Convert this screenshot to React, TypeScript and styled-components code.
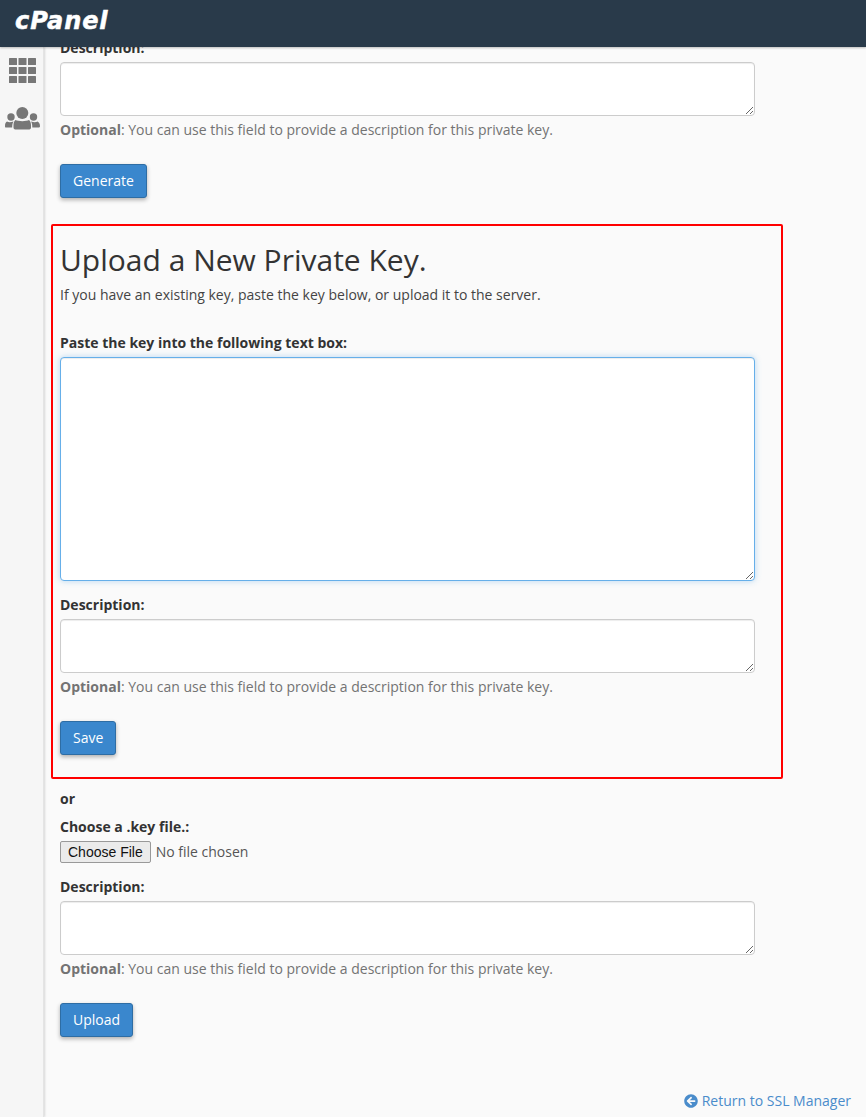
import type { FC } from 'react';

import { FaArrowCircleLeft } from 'react-icons/fa';

import styled, { createGlobalStyle } from 'styled-components';

const GlobalStyle = createGlobalStyle`
  html, body {
    margin: 0;
    height: 1117px;
    overflow: hidden;
    background: #fafafa;
    font-family: "Open Sans", sans-serif;
    font-size: 14px;
    line-height: 20px;
    color: #333;
  }
`;

const Page = styled.div`
  height: 1117px;
  display: flex;
  flex-direction: column;
  overflow: hidden;
`;

const Header = styled.header`
  position: relative;
  z-index: 2;
  flex: 0 0 47px;
  height: 47px;
  background: #293a4a;
  box-shadow: 0 1px 2px rgba(0, 0, 0, 0.25);
  display: flex;
  align-items: center;
  padding-left: 15px;
`;

const Logo = styled.span`
  font-family: "DejaVu Sans", sans-serif;
  font-weight: 700;
  font-style: italic;
  font-size: 24px;
  line-height: 1;
  letter-spacing: 0.9px;
  color: #fff;
  -webkit-text-stroke: 0.5px #fff;
  margin-top: -5px;
`;

const Body = styled.div`
  flex: 1;
  display: flex;
  min-height: 0;
`;

const Sidebar = styled.nav`
  flex: 0 0 43px;
  background: #f6f6f6;
  border-right: 1px solid #e4e4e4;
  box-shadow: 1px 0 2px rgba(0, 0, 0, 0.14);
  display: flex;
  flex-direction: column;
  padding-top: 11px;
  gap: 24px;
  color: #777;
`;

const SideIcon = styled.svg`
  display: block;
  fill: currentColor;
`;

const Main = styled.main`
  flex: 1;
  min-width: 0;
  padding: 0 15px 0 16px;
  margin-top: -9px;
  display: flex;
  flex-direction: column;
`;

const Label = styled.label`
  display: block;
  font-weight: 700;
  height: 20px;
  margin-bottom: 4px;
`;

const Area = styled.textarea<{ $tall?: boolean; $focused?: boolean }>`
  display: block;
  box-sizing: border-box;
  width: 695px;
  height: ${({ $tall }) => ($tall ? 224 : 54)}px;
  padding: 6px 12px;
  margin: 0;
  background: #fff;
  border: 1px solid ${({ $focused }) => ($focused ? '#66afe9' : '#ccc')};
  border-radius: 4px;
  outline: none;
  resize: both;
  box-shadow: ${({ $focused }) =>
    $focused
      ? 'inset 0 1px 1px rgba(0, 0, 0, 0.075), 0 0 6px rgba(102, 175, 233, 0.45)'
      : 'inset 0 1px 1px rgba(0, 0, 0, 0.075)'};
`;

const Help = styled.p`
  margin: 4px 0 0;
  color: #737373;
  height: 20px;
`;

const Button = styled.button`
  display: block;
  box-sizing: border-box;
  height: 34px;
  padding: 6px 12px;
  background: #3a87cd;
  border: 1px solid #2e6da4;
  border-radius: 3px;
  color: #fff;
  font-family: inherit;
  font-size: 14px;
  line-height: 20px;
  box-shadow: 0 2px 4px rgba(0, 0, 0, 0.3);
`;

const Row = styled.div<{ $top: number }>`
  margin-top: ${({ $top }) => $top}px;
`;

const Highlight = styled.section`
  box-sizing: border-box;
  width: 732px;
  height: 555px;
  margin: 26px 0 0 -9px;
  padding: 17px 0 0 7px;
  border: 2px solid #f00;
  border-radius: 2px;
`;

const Title = styled.h1`
  margin: 0;
  font-size: 30px;
  font-weight: 400;
  line-height: 33px;
  color: #333;
`;

const Lead = styled.p`
  margin: 9px 0 0;
  color: #444;
`;

const OrLabel = styled.div`
  font-weight: 700;
  height: 20px;
  margin-top: 10px;
`;

const FileInput = styled.input`
  display: block;
  height: 22px;
  font-family: "Open Sans", sans-serif;
  font-size: 14px;
  color: #555;

  &::file-selector-button {
    font-family: "Liberation Sans", sans-serif;
    font-size: 14px;
    color: #111;
    height: 22px;
    margin-right: 5px;
    padding: 1px 7px;
    background: #ebebeb;
    border: 1px solid #999;
    border-radius: 2px;
  }
`;

const Footer = styled.div`
  margin-top: 54px;
  display: flex;
  justify-content: flex-end;
`;

const ReturnLink = styled.a`
  display: inline-flex;
  align-items: center;
  gap: 4px;
  color: #4a8ccb;
  text-decoration: none;
`;

const OPTIONAL_TEXT = ': You can use this field to provide a description for this private key.';

const OptionalHelp: FC = () => (
  <Help>
    <strong>Optional</strong>
    {OPTIONAL_TEXT}
  </Help>
);

const GRID_CELLS = [0, 1, 2].flatMap((row) => [0, 1, 2].map((col) => ({ row, col })));

const AppsIcon: FC = () => (
  <SideIcon width={43} height={25} viewBox="0 0 43 25">
    {GRID_CELLS.map(({ row, col }) => (
      <rect key={`${row}-${col}`} x={9 + col * 9.5} y={row * 9} width={8} height={7} rx={0.5} />
    ))}
  </SideIcon>
);

const UsersIcon: FC = () => (
  <SideIcon width={43} height={23} viewBox="0 0 43 23">
    <circle cx={22.3} cy={6} r={6} />
    <path d="M15.5 13 C18 14.5 26.5 14.5 29 13 C30.5 14 31 16 31 18.5 V20.5 C31 22 30 22.5 28.5 22.5 H16 C14.5 22.5 13.5 22 13.5 20.5 V18.5 C13.5 16 14 14 15.5 13Z" />
    <circle cx={11} cy={10} r={3.7} />
    <circle cx={33.5} cy={10} r={3.7} />
    <path d="M7 14.6 C8.5 15.4 10.5 15.5 13.5 14.6 C12.5 16 12.2 18 12.2 20.5 H6 C5.2 20.5 5 20 5 19.2 C5 17 5.5 15.5 7 14.6Z" />
    <path d="M37.5 14.6 C36 15.4 34 15.5 31 14.6 C32 16 32.3 18 32.3 20.5 H38.5 C39.3 20.5 40 20 40 19.2 C40 17 39 15.5 37.5 14.6Z" />
  </SideIcon>
);

export default function App() {
  return (
    <Page>
      <GlobalStyle />
      <Header>
        <Logo>cPanel</Logo>
      </Header>
      <Body>
        <Sidebar>
          <AppsIcon />
          <UsersIcon />
        </Sidebar>
        <Main>
          <Label>Description:</Label>
          <Area />
          <OptionalHelp />
          <Row $top={24}>
            <Button type="button">Generate</Button>
          </Row>

          <Highlight>
            <Title>Upload a New Private Key.</Title>
            <Lead>If you have an existing key, paste the key below, or upload it to the server.</Lead>
            <Row $top={28}>
              <Label>Paste the key into the following text box:</Label>
              <Area $tall $focused />
            </Row>
            <Row $top={14}>
              <Label>Description:</Label>
              <Area />
              <OptionalHelp />
            </Row>
            <Row $top={24}>
              <Button type="button">Save</Button>
            </Row>
          </Highlight>

          <OrLabel>or</OrLabel>
          <Row $top={8}>
            <Label as="div">Choose a .key file.:</Label>
            <FileInput type="file" />
          </Row>
          <Row $top={14}>
            <Label>Description:</Label>
            <Area />
            <OptionalHelp />
          </Row>
          <Row $top={24}>
            <Button type="button">Upload</Button>
          </Row>
          <Footer>
            <ReturnLink href="#">
              <FaArrowCircleLeft size={14} />
              Return to SSL Manager
            </ReturnLink>
          </Footer>
        </Main>
      </Body>
    </Page>
  );
}
